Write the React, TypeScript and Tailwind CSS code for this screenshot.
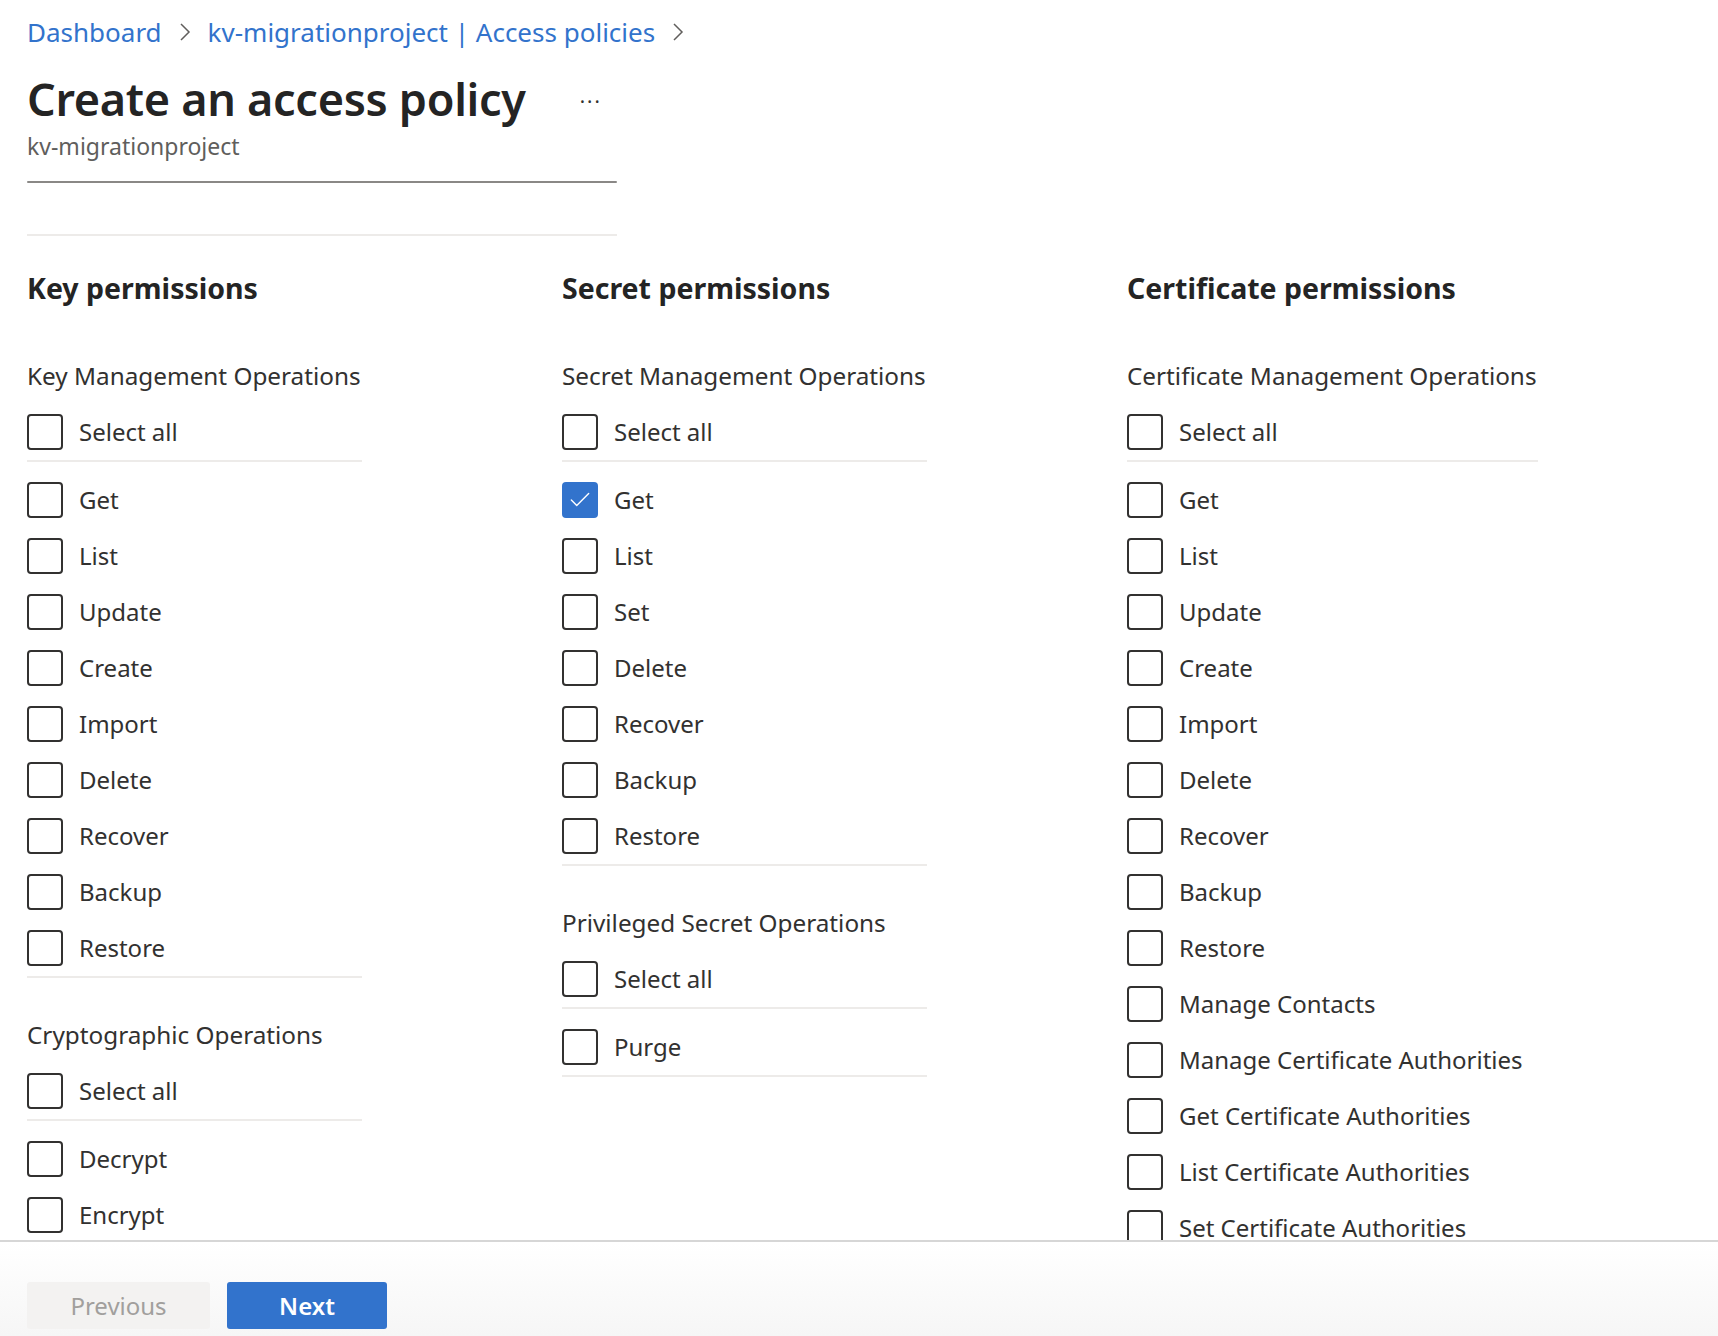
import { Check } from "lucide-react";

type Group = {
  title: string;
  items: string[];
  checked?: string[];
};

type Column = {
  heading: string;
  width: string;
  groups: Group[];
};

const columns: Column[] = [
  {
    heading: "Key permissions",
    width: "w-[335px]",
    groups: [
      {
        title: "Key Management Operations",
        items: ["Get", "List", "Update", "Create", "Import", "Delete", "Recover", "Backup", "Restore"],
      },
      {
        title: "Cryptographic Operations",
        items: ["Decrypt", "Encrypt", "Unwrap Key", "Wrap Key", "Verify", "Sign"],
      },
    ],
  },
  {
    heading: "Secret permissions",
    width: "w-[365px]",
    groups: [
      {
        title: "Secret Management Operations",
        items: ["Get", "List", "Set", "Delete", "Recover", "Backup", "Restore"],
        checked: ["Get"],
      },
      {
        title: "Privileged Secret Operations",
        items: ["Purge"],
      },
    ],
  },
  {
    heading: "Certificate permissions",
    width: "w-[411px]",
    groups: [
      {
        title: "Certificate Management Operations",
        items: [
          "Get",
          "List",
          "Update",
          "Create",
          "Import",
          "Delete",
          "Recover",
          "Backup",
          "Restore",
          "Manage Contacts",
          "Manage Certificate Authorities",
          "Get Certificate Authorities",
          "List Certificate Authorities",
          "Set Certificate Authorities",
          "Delete Certificate Authorities",
        ],
      },
    ],
  },
];

function Checkbox({ checked }: { checked?: boolean }) {
  if (checked) {
    return (
      <span className="flex h-[36px] w-[36px] shrink-0 items-center justify-center rounded-[4px] bg-[#3273cc]">
        <Check className="h-[26px] w-[26px] text-white" strokeWidth={1.3} />
      </span>
    );
  }
  return <span className="h-[36px] w-[36px] shrink-0 rounded-[4px] border-2 border-[#323130] bg-white" />;
}

function Row({ label, checked }: { label: string; checked?: boolean }) {
  return (
    <div className="flex h-[56px] items-center gap-[16px]">
      <Checkbox checked={checked} />
      <span className="whitespace-nowrap text-[24px] text-[#323130]">{label}</span>
    </div>
  );
}

function PermissionGroup({ group, first }: { group: Group; first: boolean }) {
  return (
    <div className={first ? "" : "mt-[29px]"}>
      <div className="flex h-[56px] items-center whitespace-nowrap text-[24.3px] text-[#323130]">{group.title}</div>
      <div className="border-b-2 border-[#edebe9]">
        <Row label="Select all" />
      </div>
      <div className="border-b-2 border-[#edebe9] pt-[10px]">
        {group.items.map((item) => (
          <Row key={item} label={item} checked={group.checked?.includes(item)} />
        ))}
      </div>
    </div>
  );
}

export default function App() {
  return (
    <div className="flex h-[1336px] flex-col overflow-hidden bg-white font-['Noto_Sans',sans-serif] text-[#323130]">
      <main className="flex-1 overflow-hidden px-[27px]">
        {/* breadcrumb */}
        <nav className="mt-[15px] flex h-[34px] items-center gap-[16px] text-[26px] text-[#3273cc]">
          <span>Dashboard</span>
          <Chevron />
          <span>kv-migrationproject | Access policies</span>
          <Chevron />
        </nav>

        <div className="w-[590px]">
          <div className="mt-[22px] flex h-[56px] items-center gap-[54px]">
            <h1 className="whitespace-nowrap text-[45px] font-semibold tracking-[-0.3px] text-[#242424]">Create an access policy</h1>
            <span className="mt-[-6px] text-[20px] tracking-[2px] text-[#323130]">...</span>
          </div>
          <div className="mt-[4px] h-[30px] text-[23px] leading-[30px] text-[#605e5c]">kv-migrationproject</div>
          <div className="mt-[20px] h-[2px] rounded-full bg-[#8a8886]" />
          <div className="mt-[51px] h-[2px] bg-[#edebe9]" />
        </div>

        <div className="mt-[34px] flex gap-[200px]">
          {columns.map((col) => (
            <section key={col.heading} className={col.width}>
              <h2 className="h-[36px] whitespace-nowrap text-[28.5px] font-bold leading-[36px] text-[#242424]">{col.heading}</h2>
              <div className="mt-[42px]">
                {col.groups.map((g, i) => (
                  <PermissionGroup key={g.title} group={g} first={i === 0} />
                ))}
              </div>
            </section>
          ))}
        </div>
      </main>

      <footer className="flex h-[96px] shrink-0 gap-[17px] border-t-2 border-[#d6d6d6] bg-gradient-to-b from-white to-[#f6f6f6] px-[27px] pt-[40px]">
        <button className="h-[47px] w-[183px] rounded-[3px] bg-[#f3f2f1] text-[24px] text-[#a19f9d]">Previous</button>
        <button className="h-[47px] w-[160px] rounded-[3px] bg-[#3273cc] text-[24px] font-semibold text-white">Next</button>
      </footer>
    </div>
  );
}

function Chevron() {
  return (
    <svg width="14" height="22" viewBox="0 0 14 22" fill="none" className="shrink-0">
      <path d="M3 3l8 8-8 8" stroke="#605e5c" strokeWidth="1.5" />
    </svg>
  );
}
